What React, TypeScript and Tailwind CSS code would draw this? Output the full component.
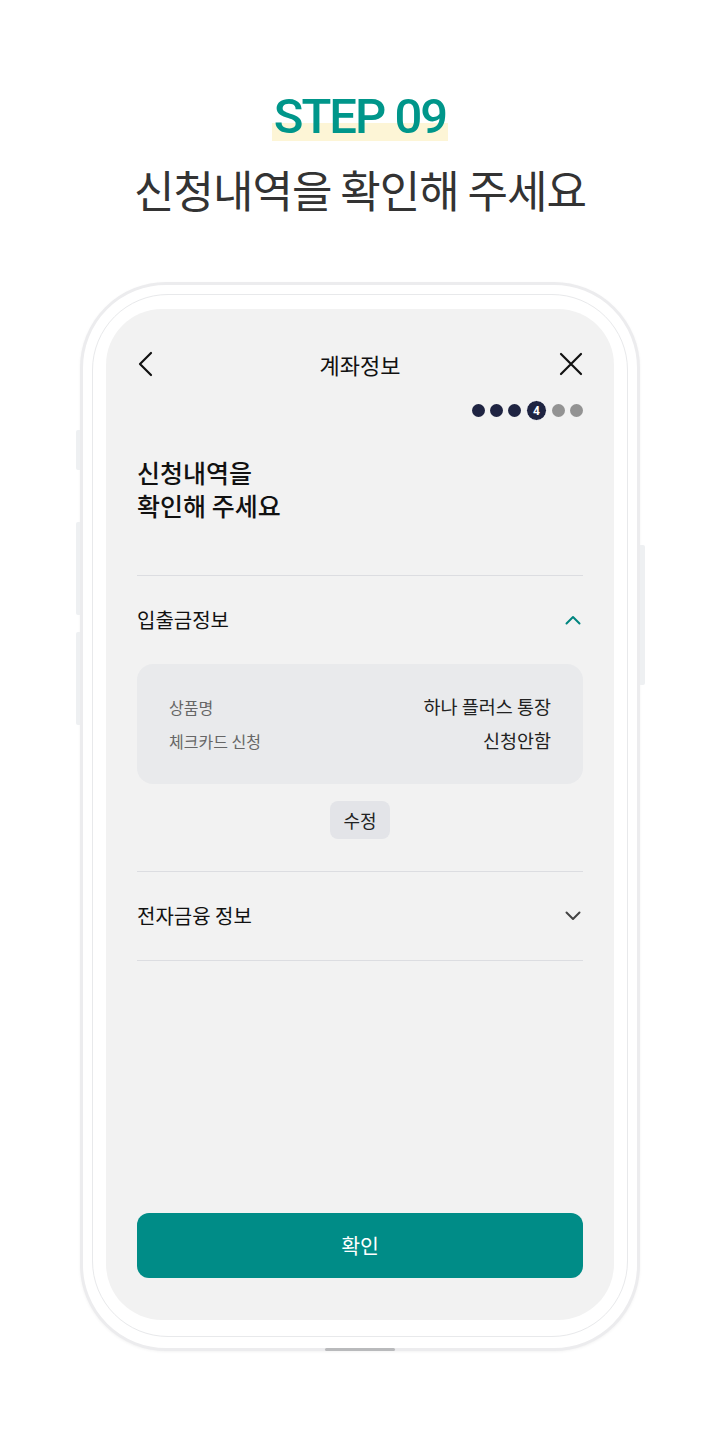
import React from 'react';

const KR = "font-['Noto_Sans_CJK_KR','Noto_Sans',sans-serif]";

function BackIcon() {
  return (
    <svg width="16" height="26" viewBox="0 0 16 26" fill="none">
      <path d="M14 2 L3 13 L14 24" stroke="#111" strokeWidth="2.2" strokeLinecap="round" strokeLinejoin="round" />
    </svg>
  );
}

function CloseIcon() {
  return (
    <svg width="24" height="24" viewBox="0 0 24 24" fill="none">
      <path d="M2 2 L22 22 M22 2 L2 22" stroke="#111" strokeWidth="2.2" strokeLinecap="round" />
    </svg>
  );
}

function Chevron({ up, color }: { up?: boolean; color: string }) {
  return (
    <svg width="16" height="10" viewBox="0 0 16 10" fill="none">
      <path
        d={up ? 'M1.5 8.5 L8 2 L14.5 8.5' : 'M1.5 1.5 L8 8 L14.5 1.5'}
        stroke={color}
        strokeWidth="2"
        strokeLinecap="round"
        strokeLinejoin="round"
      />
    </svg>
  );
}

function StepDots() {
  return (
    <div className="flex items-center justify-end gap-[5px]">
      <span className="h-[13px] w-[13px] rounded-full bg-[#1f2442]" />
      <span className="h-[13px] w-[13px] rounded-full bg-[#1f2442]" />
      <span className="h-[13px] w-[13px] rounded-full bg-[#1f2442]" />
      <span className="flex h-[21px] w-[21px] items-center justify-center rounded-full border-[1.5px] border-white bg-[#1f2442] font-['Roboto',sans-serif] text-[12px] font-bold leading-none text-white">
        4
      </span>
      <span className="h-[13px] w-[13px] rounded-full bg-[#939393]" />
      <span className="h-[13px] w-[13px] rounded-full bg-[#939393]" />
    </div>
  );
}

interface InfoRowProps {
  label: string;
  value: string;
}

function InfoRow({ label, value }: InfoRowProps) {
  return (
    <div className="flex h-[34px] items-baseline justify-between">
      <span className="text-[16px] leading-[34px] text-[#666]">{label}</span>
      <span className="text-[18.5px] leading-[34px] text-[#222]">{value}</span>
    </div>
  );
}

export default function App() {
  return (
    <div className={`flex h-[1451px] w-[720px] flex-col items-center bg-white ${KR}`}>
      {/* Title */}
      <div className="mt-[93px] flex flex-col items-center">
        <span className="bg-[linear-gradient(transparent_62%,#fdf5d6_62%,#fdf5d6_100%)] px-[2px] font-['Roboto',sans-serif] text-[49px] font-medium leading-[48px] tracking-[-2px] text-[#00968a]">
          STEP 09
        </span>
        <h1 className="mt-[20px] text-[44px] font-normal leading-[56px] tracking-[-1px] text-[#333]">
          신청내역을 확인해 주세요
        </h1>
      </div>

      {/* Phone */}
      <div className="relative mt-[65px] rounded-[86px] border-[3px] border-[#ececee] bg-white p-[9px] pb-[11px] shadow-[0_1px_3px_rgba(0,0,0,0.05)]">
        {/* side buttons */}
        <span className="absolute left-[-7px] top-[145px] h-[40px] w-[4px] rounded-l-[2px] bg-[#eef0f2]" />
        <span className="absolute left-[-7px] top-[237px] h-[93px] w-[4px] rounded-l-[2px] bg-[#eef0f2]" />
        <span className="absolute left-[-7px] top-[347px] h-[93px] w-[4px] rounded-l-[2px] bg-[#eef0f2]" />
        <span className="absolute right-[-8px] top-[260px] h-[140px] w-[5px] rounded-r-[2px] bg-[#eef0f2]" />
        <span className="absolute bottom-[-3px] left-[242px] h-[3px] w-[70px] rounded-[2px] bg-[#b9babc]" />

        <div className="rounded-[76px] border border-[#e8e9eb] bg-white px-[13px] pb-[16px] pt-[14px]">
          {/* Screen */}
          <div className="flex h-[1011px] w-[508px] flex-col rounded-[56px] bg-[#f2f2f2] px-[31px] pb-[42px] pt-[41px]">
            {/* Header */}
            <div className="grid h-[28px] grid-cols-[1fr_auto_1fr] items-center">
              <span className="flex justify-start">
                <BackIcon />
              </span>
              <span className="text-[22px] leading-none text-[#111]">계좌정보</span>
              <span className="flex justify-end">
                <CloseIcon />
              </span>
            </div>

            <div className="mt-[22px]">
              <StepDots />
            </div>

            <h2 className="mt-[35px] text-[25px] font-medium leading-[33px] text-[#111]">
              신청내역을
              <br />
              확인해 주세요
            </h2>

            <div className="mt-[53px] h-px bg-[#dcdde1]" />

            {/* 입출금정보 */}
            <div className="flex h-[88px] items-center justify-between">
              <span className="text-[20px] text-[#111]">입출금정보</span>
              <span className="pr-[2px]">
                <Chevron up color="#00857f" />
              </span>
            </div>

            <div className="rounded-[16px] bg-[#e9eaec] px-[32px] pb-[27px] pt-[25px]">
              <InfoRow label="상품명" value="하나 플러스 통장" />
              <InfoRow label="체크카드 신청" value="신청안함" />
            </div>

            <div className="mt-[17px] flex justify-center">
              <button
                type="button"
                className="h-[38px] w-[60px] rounded-[8px] bg-[#e3e4e8] text-[18px] text-[#222]"
              >
                수정
              </button>
            </div>

            <div className="mt-[32px] h-px bg-[#dcdde1]" />

            {/* 전자금융 정보 */}
            <div className="flex h-[88px] items-center justify-between">
              <span className="text-[20px] text-[#111]">전자금융 정보</span>
              <span className="pr-[2px]">
                <Chevron color="#444" />
              </span>
            </div>

            <div className="h-px bg-[#dcdde1]" />

            <div className="flex-1" />

            <button
              type="button"
              className="h-[65px] w-full rounded-[12px] bg-[#008c87] text-[20.5px] text-white"
            >
              확인
            </button>
          </div>
        </div>
      </div>
    </div>
  );
}
